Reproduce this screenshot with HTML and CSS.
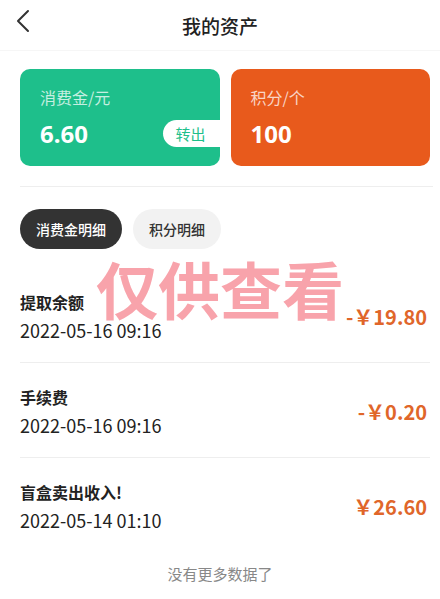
FILE: index.html
```html
<!DOCTYPE html>
<html lang="zh-CN">
	<head>
		<meta charset="utf-8">
		<title>我的资产</title>
		<link rel="stylesheet" href="styles.css">
	</head>
	<body>
		<header class="topbar">
			<svg class="back" width="16" height="24" viewBox="0 0 16 24">
				<polyline points="13,2 3,12 13,22" fill="none" stroke="#333" stroke-width="2" stroke-linecap="round" stroke-linejoin="round"/>
			</svg>
			<h1>我的资产</h1>
		</header>

		<main class="page">
			<section class="cards">
				<div class="card card-green">
					<p class="card-label">消费金/元</p>
					<div class="card-row">
						<span class="card-value">6.60</span>
						<span class="transfer">转出</span>
					</div>
				</div>
				<div class="card card-orange">
					<p class="card-label">积分/个</p>
					<div class="card-row">
						<span class="card-value">100</span>
					</div>
				</div>
			</section>

			<nav class="tabs">
				<span class="tab active">消费金明细</span>
				<span class="tab">积分明细</span>
			</nav>

			<ul class="records">
				<li class="record">
					<div>
						<p class="record-title">提取余额</p>
						<p class="record-date">2022-05-16 09:16</p>
					</div>
					<span class="amount">-￥19.80</span>
				</li>
				<li class="record">
					<div>
						<p class="record-title">手续费</p>
						<p class="record-date">2022-05-16 09:16</p>
					</div>
					<span class="amount">-￥0.20</span>
				</li>
				<li class="record">
					<div>
						<p class="record-title">盲盒卖出收入!</p>
						<p class="record-date">2022-05-14 01:10</p>
					</div>
					<span class="amount">￥26.60</span>
				</li>
			</ul>

			<p class="no-more">没有更多数据了</p>
		</main>

		<div class="watermark">仅供查看</div>
	</body>
</html>
```

FILE: styles.css
```css
body {
	margin: 0;
	font-family: "Noto Sans CJK SC", "Noto Sans", sans-serif;
	color: #222;
	background: #fff;
}
p { margin: 0; }

.topbar {
	height: 50px;
	display: flex;
	align-items: center;
	justify-content: center;
	position: relative;
	border-bottom: 1px solid #f6f6f6;
}
.topbar h1 { margin: 0; font-size: 19px; font-weight: 500; color: #222; }
.back { position: absolute; left: 15px; top: 9px; }

.page { padding: 18px 10px 0 20px; }

.cards { display: flex; gap: 11px; padding-bottom: 20px; border-bottom: 1px solid #eee; margin-right: -3px; padding-right: 3px; }
.card {
	flex: 1;
	height: 97px;
	box-sizing: border-box;
	padding: 17px 0 0 20px;
	border-radius: 10px;
	color: #fff;
}
.card-green { background: #1ebf8b; }
.card-orange { background: #e85a1c; }
.card-label { font-size: 16px; line-height: 22px; color: rgba(255,255,255,0.75); }
.card-row { display: flex; align-items: center; justify-content: space-between; height: 30px; margin-top: 10px; }
.card-value { font-size: 24px; font-weight: 700; font-family: "Noto Sans", sans-serif; }
.transfer {
	height: 27px;
	line-height: 27px;
	width: 57px;
	box-sizing: border-box;
	padding-left: 13px;
	background: #fff;
	color: #1ebf8b;
	font-size: 15px;
	border-radius: 14px 0 0 14px;
}

.tabs { display: flex; gap: 11px; padding-top: 22px; }
.tab {
	height: 40px;
	line-height: 40px;
	padding: 0 16px;
	border-radius: 20px;
	background: #f2f2f2;
	font-size: 14px;
	font-weight: 500;
	color: #333;
}
.tab.active { background: #333; color: #fff; }

.records { list-style: none; margin: 19px 0 0; padding: 0; }
.record {
	display: flex;
	align-items: center;
	justify-content: space-between;
	padding: 22px 0 20px;
	border-bottom: 1px solid #eee;
}
.record:last-child { border-bottom: none; }
.record-title { font-size: 16px; line-height: 24px; font-weight: 700; color: #222; }
.record-date { font-size: 18px; line-height: 24px; margin-top: 4px; color: #222; }
.amount { font-size: 20px; font-weight: 700; color: #e0662a; margin-right: 3px; }

.no-more { text-align: center; font-size: 15px; color: #888; padding-top: 11px; padding-right: 10px; }

.watermark {
	position: absolute;
	left: 96px;
	top: 251px;
	font-size: 62px;
	font-weight: 700;
	line-height: 1.2;
	color: rgba(246, 140, 150, 0.8);
	pointer-events: none;
}
```
